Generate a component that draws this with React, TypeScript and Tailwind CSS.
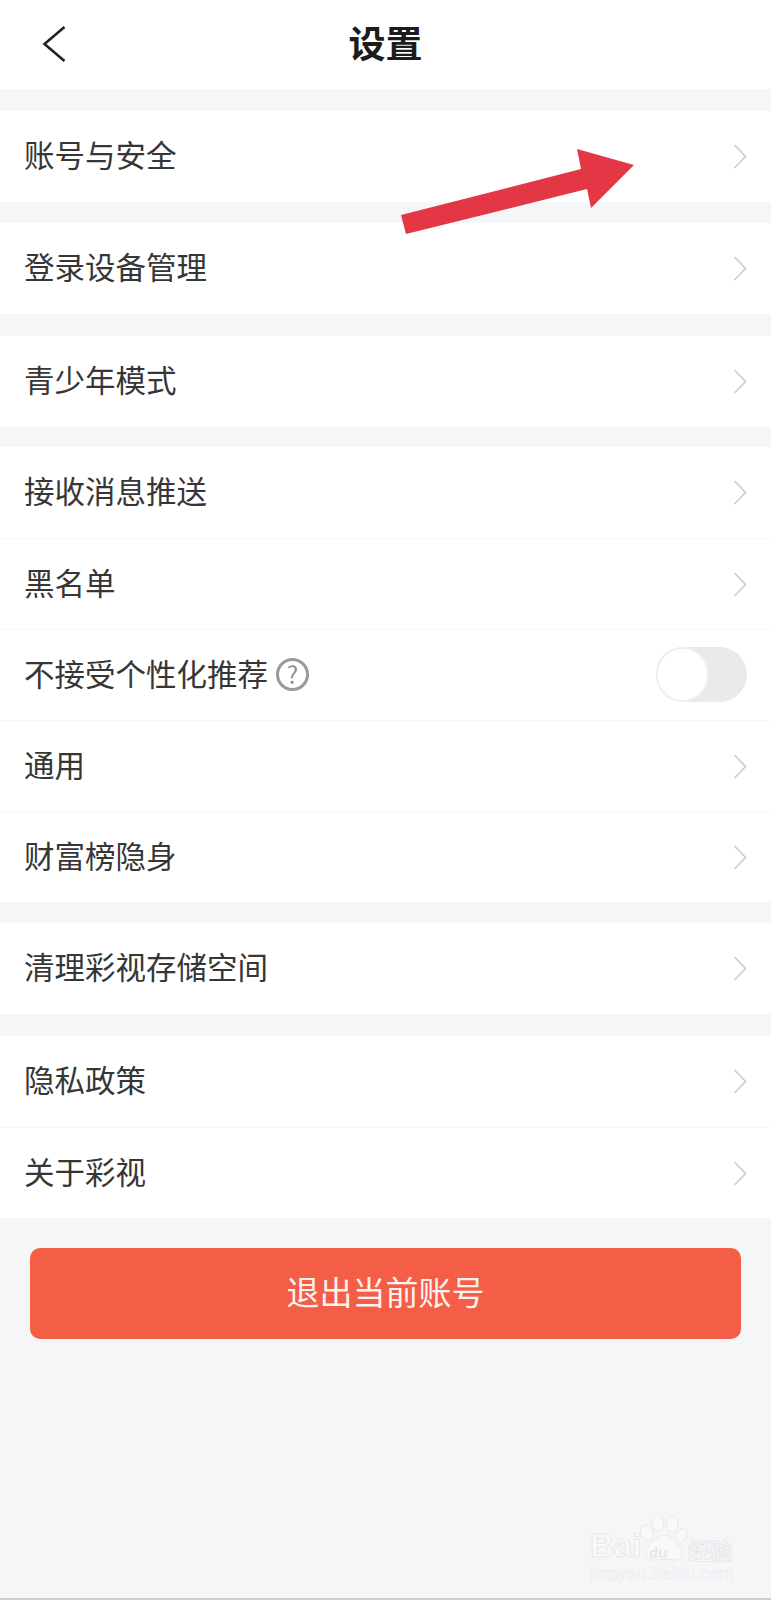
import React from 'react';

const fontClass = "font-['Noto_Sans_CJK_SC','Noto_Sans',sans-serif]";

interface RowData {
    label: string;
    help?: boolean;
    toggle?: boolean;
}

interface SectionData {
    marginClass: string;
    rows: RowData[];
}

const SECTIONS: SectionData[] = [
    { marginClass: 'mt-[22px]', rows: [{ label: '账号与安全' }] },
    { marginClass: 'mt-[21px]', rows: [{ label: '登录设备管理' }] },
    { marginClass: 'mt-[22px]', rows: [{ label: '青少年模式' }] },
    {
        marginClass: 'mt-[20px]',
        rows: [
            { label: '接收消息推送' },
            { label: '黑名单' },
            { label: '不接受个性化推荐', help: true, toggle: true },
            { label: '通用' },
            { label: '财富榜隐身' },
        ],
    },
    { marginClass: 'mt-[21px]', rows: [{ label: '清理彩视存储空间' }] },
    { marginClass: 'mt-[22px]', rows: [{ label: '隐私政策' }, { label: '关于彩视' }] },
];

const ChevronRight = () => (
    <svg width="14" height="25" viewBox="0 0 14 25" fill="none" className="shrink-0">
        <path d="M1.5 1 L12.5 12.5 L1.5 24" stroke="#cfcfcf" strokeWidth="1.8" />
    </svg>
);

const Toggle = () => (
    <div className="mb-[2px] h-[55px] w-[91px] rounded-full bg-[#e9eaec]">
        <div className="h-[55px] w-[53px] rounded-full border-2 border-[#eeeff0] bg-white" />
    </div>
);

const Row: React.FC<{ row: RowData; first: boolean }> = ({ row, first }) => (
    <div className={`flex h-[91px] items-center justify-between pl-[24px] pr-[24px] ${first ? '' : 'border-t border-[#f8f8f8]'}`}>
        <div className="flex items-center">
            <span className="pb-[4px] text-[30.5px] leading-none text-[#363636]">{row.label}</span>
            {row.help && (
                <span className="mb-[2px] ml-[8px] flex h-[33px] w-[33px] items-center justify-center rounded-full border-[3px] border-[#9a9a9a] pb-[1px] text-[24px] leading-none text-[#8f8f8f]">?</span>
            )}
        </div>
        {row.toggle ? <Toggle /> : <ChevronRight />}
    </div>
);

const Watermark = () => (
    <div className="absolute left-[588px] top-[1515px] h-[70px] w-[146px] text-[#f9f9fa]">
        <svg width="60" height="50" viewBox="0 0 60 50" className="absolute left-[46px] top-0" fill="#f9f9fa" stroke="#e8e9eb" strokeWidth="1">
            <ellipse cx="13" cy="18" rx="6" ry="8" transform="rotate(-25 13 18)" />
            <ellipse cx="24" cy="8" rx="6" ry="8" />
            <ellipse cx="38" cy="9" rx="6" ry="8" />
            <ellipse cx="48" cy="20" rx="5" ry="7" transform="rotate(25 48 20)" />
            <path d="M30 20 C22 20 20 27 15 31 C9 36 12 46 21 45 C26 44 34 44 39 45 C48 46 51 37 45 31 C40 27 38 20 30 20 Z" />
        </svg>
        <span className="absolute left-[2px] top-[14px] font-['Liberation_Sans',sans-serif] text-[33px] font-bold leading-none [-webkit-text-stroke:1px_#e8e9eb]">Bai</span>
        <span className="absolute left-[61px] top-[30px] font-['Liberation_Sans',sans-serif] text-[15px] font-bold leading-none text-[#e6e7e9]">du</span>
        <span className="absolute left-[100px] top-[23px] text-[22px] font-bold leading-none [-webkit-text-stroke:1px_#e6e7e9]">经验</span>
        <span className="absolute left-[2px] top-[50px] font-['Liberation_Sans',sans-serif] text-[17px] leading-none tracking-[0.4px] [-webkit-text-stroke:0.6px_#ebecee]">jingyan.baidu.com</span>
    </div>
);

const App: React.FC = () => {
    return (
        <div className={`relative h-[1600px] w-[771px] overflow-hidden border-b-2 border-[#cfcfcf] bg-[#f5f6f8] ${fontClass}`}>
            <header className="relative flex h-[89px] items-center justify-center bg-white">
                <svg width="26" height="38" viewBox="0 0 26 38" fill="none" className="absolute left-[42px] top-[25px]">
                    <path d="M22.5 2 L2.5 19 L22.5 36" stroke="#222222" strokeWidth="2.6" />
                </svg>
                <h1 className="pb-[5px] text-[37px] font-bold leading-none text-[#1c1c1c]">设置</h1>
            </header>

            {SECTIONS.map(section => (
                <section key={section.rows[0].label} className={`bg-white ${section.marginClass}`}>
                    {section.rows.map((row, i) => (
                        <Row key={row.label} row={row} first={i === 0} />
                    ))}
                </section>
            ))}

            <div className="px-[30px] pt-[30px]">
                <button type="button" className="flex h-[91px] w-full items-center justify-center rounded-[10px] bg-[#f45d46] pb-[5px] text-[33px] leading-none text-[#fdf3ee]">
                    退出当前账号
                </button>
            </div>

            {/* red annotation arrow drawn over the screenshot */}
            <svg width="771" height="260" viewBox="0 0 771 260" className="absolute left-0 top-0">
                <polygon points="401,215 581,169 577,149 634,165 591,208 587,189 406,234" fill="#e33746" />
            </svg>

            <Watermark />
        </div>
    );
};

export default App;
